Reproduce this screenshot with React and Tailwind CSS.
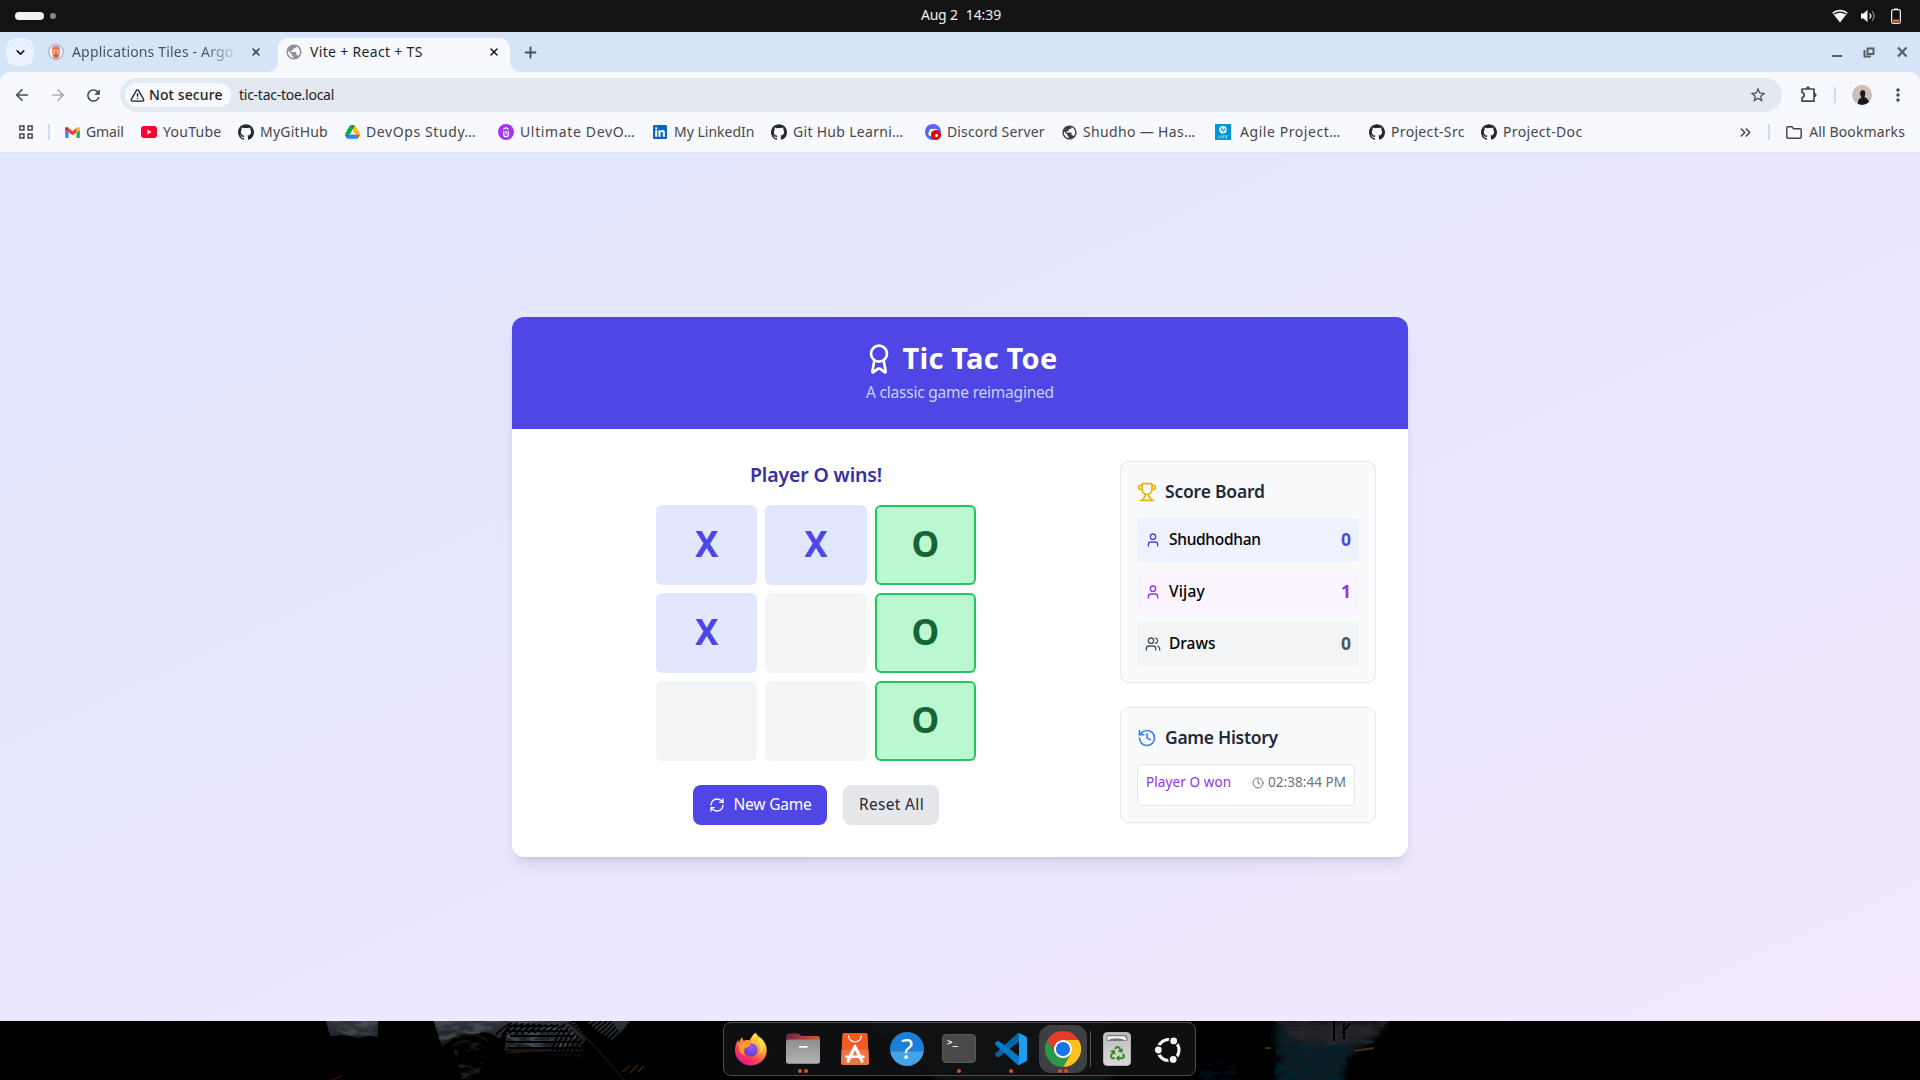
import React from "react";
import {
  Award, Trophy, User, Users, History, Clock, RefreshCw, ArrowLeft, ArrowRight,
  ChevronDown, ChevronsRight, X, Plus, TriangleAlert,
} from "lucide-react";
import { SiGithub } from "react-icons/si";
import { FaDiscord, FaRecycle } from "react-icons/fa";
import { MdPublic, MdStarBorder, MdMoreVert, MdRefresh } from "react-icons/md";

/* ---------- small icons ---------- */

const GmailIcon = () => (
  <svg viewBox="52 42 88 66" className="h-[11px] w-[15px]">
    <path fill="#4285f4" d="M58 108h14V74L52 59v43c0 3.32 2.69 6 6 6" />
    <path fill="#34a853" d="M120 108h14c3.32 0 6-2.69 6-6V59l-20 15" />
    <path fill="#fbbc04" d="M120 48v26l20-15v-8c0-7.42-8.47-11.65-14.4-7.2" />
    <path fill="#ea4335" d="M72 74V48l24 18 24-18v26L96 92" />
    <path fill="#c5221f" d="M52 51v8l20 15V48l-5.6-4.2c-5.94-4.45-14.4-.22-14.4 7.2" />
  </svg>
);

const YouTubeIcon = () => (
  <svg viewBox="0 0 16 12" className="h-3 w-4">
    <rect width="16" height="12" rx="3" fill="#ff0033" />
    <path d="M6.4 3.5v5L10.6 6z" fill="#fff" />
  </svg>
);

const DriveIcon = () => (
  <svg viewBox="0 0 87.3 78" className="h-[14px] w-[15px]">
    <path fill="#0066da" d="m6.6 66.85 3.85 6.65c.8 1.4 1.95 2.5 3.3 3.3l13.75-23.8h-27.5c0 1.55.4 3.1 1.2 4.5z" />
    <path fill="#00ac47" d="m43.65 25-13.75-23.8c-1.35.8-2.5 1.9-3.3 3.3l-25.4 44a9.06 9.06 0 0 0 -1.2 4.5h27.5z" />
    <path fill="#ea4335" d="m73.55 76.8c1.35-.8 2.5-1.9 3.3-3.3l1.6-2.75 7.65-13.25c.8-1.4 1.2-2.95 1.2-4.5h-27.502l5.852 11.5z" />
    <path fill="#00832d" d="m43.65 25 13.75-23.8c-1.35-.8-2.9-1.2-4.5-1.2h-18.5c-1.6 0-3.15.45-4.5 1.2z" />
    <path fill="#2684fc" d="m59.8 53h-32.3l-13.75 23.8c1.35.8 2.9 1.2 4.5 1.2h50.8c1.6 0 3.15-.45 4.5-1.2z" />
    <path fill="#ffba00" d="m73.4 26.5-12.7-22c-.8-1.4-1.95-2.5-3.3-3.3l-13.75 23.8 16.15 28h27.45c0-1.55-.4-3.1-1.2-4.5z" />
  </svg>
);

const GitHubIcon = () => <SiGithub size={16} color="#24292f" />;

const UdemyIcon = () => (
  <svg viewBox="0 0 16 16" className="size-4">
    <circle cx="8" cy="8" r="8" fill="#a435f0" />
    <path d="M5.4 5.2 8 3.7l2.6 1.5M5.7 7v3.4a2.3 2.3 0 0 0 4.6 0V7M8 6.4v4" fill="none" stroke="#fff" strokeWidth="1.2" />
  </svg>
);

const LinkedInIcon = () => (
  <svg viewBox="0 0 14 14" className="size-[14px]">
    <rect width="14" height="14" rx="1.2" fill="#0a66c2" />
    <g fill="#fff">
      <circle cx="3.2" cy="3.3" r="1.15" />
      <path d="M2.2 5.3h2v6.5h-2zM5.5 5.3h1.9v.9c.4-.7 1.1-1.1 2.1-1.1 1.9 0 2.4 1.2 2.4 3v3.7h-2V8.5c0-.9-.1-1.7-1.1-1.7s-1.3.7-1.3 1.7v3.3h-2z" />
    </g>
  </svg>
);

const DiscordIcon = () => (
  <span className="relative flex size-4 items-center justify-center rounded-full bg-[#5865f2]">
    <FaDiscord size={11} color="#fff" />
    <span className="absolute right-0 bottom-0 flex size-2.5 items-center justify-center rounded-full bg-[#e8000b]">
      <span className="size-[3px] rounded-full bg-white" />
    </span>
  </span>
);

const GlobeIcon = () => <MdPublic size={17} color="#3c4043" className="shrink-0" />;

const HpLifeIcon = () => (
  <svg viewBox="0 0 16 16" className="size-4">
    <rect width="16" height="16" fill="#0096d6" />
    <circle cx="8" cy="5.7" r="3.7" fill="#fff" />
    <path d="M7 3 5.8 7.2M6.6 4.8c1-.3 1.2 0 1 .7l-.5 1.7M9.3 4.4 8.2 8.6M9.2 4.6c1 0 1.3.2 1 .9-.3 1-.6 1.5-1.6 1.5" stroke="#0096d6" strokeWidth=".8" fill="none" />
    <path d="M3.8 11.6v2.4h1.4M6.6 11.4v2.8M8.2 14.2v-2.6h1.4M8.2 12.8h1.2M12.4 11.7h-1.5v2.4h1.5M10.9 12.9h1.3" stroke="#b9e2f5" strokeWidth=".7" fill="none" />
  </svg>
);

const ArgoIcon = () => (
  <svg viewBox="0 0 16 16" className="size-4">
    <circle cx="8" cy="8" r="7.4" fill="#f4f1fb" stroke="#9b8bd0" strokeWidth=".9" />
    <path d="M8 1.8c2.700 0 4.100 2 4.100 4.800 0 2-.5 3-.9 4.400-.3 1.200-.5 3.400-1.200 3.400H6c-.7 0-.9-2.200-1.200-3.400-.4-1.400-.9-2.400-.9-4.400 0-2.800 1.400-4.800 4.100-4.800z" fill="#ef7b4d" />
    <circle cx="5.900" cy="7.400" r="1.400" fill="#fff" />
    <circle cx="10.100" cy="7.400" r="1.400" fill="#fff" />
    <circle cx="5.900" cy="7.400" r=".6" fill="#222" />
    <circle cx="10.100" cy="7.400" r=".6" fill="#222" />
    <path d="M6.200 11.200c1.200.7 2.400.7 3.600 0-.2 1.600-3.400 1.600-3.600 0z" fill="#1d2733" />
  </svg>
);

const AppsIcon = () => (
  <svg viewBox="0 0 14 14" className="size-[14px]" fill="none" stroke="#474747" strokeWidth="1.500">
    <path d="M.9.9h4v4h-4zM9.100.9h4v4h-4zM.9 9.100h4v4h-4zM9.100 9.100h4v4h-4z" />
  </svg>
);

const ExtensionIcon = () => (
  <svg viewBox="0 0 20 20" className="size-5" fill="none" stroke="#3f4a5c" strokeWidth="1.700" strokeLinejoin="round">
    <path d="M3 4h12v12.200H3v-3.500c1.600-.3 2.200-1.300 2.200-2.600S4.600 7.700 3 7.500z" />
    <path d="M7.300 3.500a1.700 1.700 0 0 1 3.400 0zM15.500 8.300a1.700 1.700 0 0 1 0 3.400z" fill="#3f4a5c" strokeWidth=".8" />
  </svg>
);

const FolderIcon = () => (
  <svg viewBox="0 0 16 13" className="h-[13px] w-4" fill="none" stroke="#474747" strokeWidth="1.500" strokeLinejoin="round">
    <path d="M.8 2c0-.7.500-1.200 1.200-1.200h3.800l1.800 2H14c.7 0 1.200.5 1.200 1.200v7c0 .7-.5 1.200-1.200 1.200H2c-.7 0-1.200-.5-1.200-1.200z" />
  </svg>
);

/* ---------- system bar ---------- */

function TopBar() {
  return (
    <div className="grid h-8 grid-cols-[1fr_auto_1fr] items-center bg-[#131313] text-[14px] text-[#f0f0f0]">
      <div className="flex items-center pl-[15px]">
        <span className="h-2 w-[29px] rounded-full bg-[#f2f2f2]" />
        <span className="ml-[6px] size-1.5 rounded-full bg-[#868686]" />
      </div>
      <div className="flex gap-[8px] pb-[3px] pl-[2px]">
        <span className="tracking-[-0.2px]">Aug 2</span>
        <span className="tracking-[-0.1px]">14:39</span>
      </div>
      <div className="flex items-center justify-end gap-[13px] pr-[19px]">
        <svg viewBox="0 0 16 14" className="h-[14px] w-4">
          <path d="M.3 3.800C4.600-.3 11.400-.3 15.700 3.800L8 13.400z" fill="#f2f2f2" />
          <path d="M2.200 5.100c3.400-2.600 8.200-2.600 11.600 0" fill="none" stroke="#131313" strokeWidth="1.200" />
        </svg>
        <svg viewBox="0 0 15 14" className="h-[14px] w-[15px]">
          <path d="M0 4.500h2.500L6.500.7v12.600L2.500 9.500H0z" fill="#f2f2f2" />
          <path d="M8.600 4.500c1.400 1.400 1.400 3.600 0 5" stroke="#f2f2f2" strokeWidth="1.300" fill="none" />
          <path d="M11 2.300c2.800 2.700 2.800 6.700 0 9.400" stroke="#7a7a7a" strokeWidth="1.300" fill="none" />
        </svg>
        <svg viewBox="0 0 10 16" className="ml-[2px] h-4 w-[10px]">
          <path d="M3 .5h4v1.500H3z" fill="#f2f2f2" />
          <rect x=".6" y="1.700" width="8.800" height="13.600" rx="1.800" fill="none" stroke="#f2f2f2" strokeWidth="1.200" />
          <path d="M2 11.500h6v2.400H2z" fill="#f0682e" />
        </svg>
      </div>
    </div>
  );
}

/* ---------- browser chrome ---------- */

function TabStrip() {
  return (
    <div className="flex h-10 items-end bg-[#d5e4f7] text-[14px] text-[#1f1f1f]">
      <div className="flex h-10 w-[268px] items-center pl-[6px]">
        <div className="flex size-7 items-center justify-center rounded-[10px] bg-[#e8f1ff]">
          <ChevronDown size={13} strokeWidth={3.200} />
        </div>
        <div className="ml-[14px] flex size-4"><ArgoIcon /></div>
        <span className="ml-2 w-[164px] overflow-hidden bg-gradient-to-r from-[#474f58] from-80% to-[#c5d3e4] bg-clip-text pb-[2px] whitespace-nowrap tracking-[0.17px] text-transparent">
          Applications Tiles - Argo
        </span>
        <X size={12} strokeWidth={3.200} className="ml-[14px] shrink-0 text-[#3c4450]" />
      </div>
      <svg viewBox="0 0 10 10" className="size-[10px]"><path d="M10 0v10H0A10 10 0 0 0 10 0z" fill="#f8f9ff" /></svg>
      <div className="flex h-[34px] w-[232px] items-center rounded-t-[10px] bg-[#f8f9ff] pb-[6px] pl-[7px]">
        <MdPublic size={18} color="#8f9296" />
        <span className="ml-[7px] w-[178px] pb-[2px] tracking-[0.32px]">Vite + React + TS</span>
        <X size={12} strokeWidth={3.200} />
      </div>
      <svg viewBox="0 0 10 10" className="size-[10px]"><path d="M0 0v10h10A10 10 0 0 1 0 0z" fill="#f8f9ff" /></svg>
      <div className="flex h-10 flex-1 items-center justify-between pr-[12px] pl-[2px]">
        <Plus size={17} strokeWidth={2.600} className="text-[#44505e]" />
        <svg viewBox="0 0 76 12" className="h-3 w-[76px]" fill="none" stroke="#5a5f66" strokeWidth="2">
          <path d="M0 10h10M32.500 4v6.500H39" />
          <path d="M35.500 2.500h6v5.500h-6z" />
          <path d="M66 1.500l8.500 9M74.500 1.500l-8.500 9" strokeWidth="2.200" />
        </svg>
      </div>
    </div>
  );
}

function Toolbar() {
  return (
    <div className="bg-[#d5e4f7]">
      <div className="flex h-[46px] items-center rounded-t-[10px] bg-[#f8f9ff] pl-[13px] text-[14px] text-[#1f1f1f]">
        <ArrowLeft size={18} strokeWidth={2.300} className="text-[#44505e]" />
        <ArrowRight size={18} strokeWidth={2.300} className="ml-[18px] text-[#a9adb3]" />
        <MdRefresh size={19} className="ml-[17px] text-[#3f4a58]" />
        <div className="ml-[17px] flex h-[34px] w-[1662px] items-center rounded-full bg-[#e3e9f1] pr-[15px] pl-[5px]">
          <div className="flex h-6 w-[106px] items-center rounded-full bg-[#f8f9ff] pl-[5px]">
            <TriangleAlert size={15} strokeWidth={2.200} />
            <span className="ml-[4px] pb-[2px] font-medium tracking-[0.1px] whitespace-nowrap">Not secure</span>
          </div>
          <span className="ml-[8px] flex-1 pb-[2px] tracking-[-0.260px]">tic-tac-toe.local</span>
          <MdStarBorder size={18} color="#44474d" />
        </div>
        <span className="ml-[17px]"><ExtensionIcon /></span>
        <span className="ml-[15px] h-4 w-[2px] bg-[#c9defb]" />
        <svg viewBox="0 0 20 20" className="ml-4 size-5 rounded-full">
          <rect width="20" height="20" fill="#c9bfb8" />
          <rect width="20" height="6" fill="#d3beb0" />
          <path d="M6 20c-.6-4 .8-7 4-7.600-2-1-2.200-4.200-1.500-6C9.200 4.600 13 4.800 13.200 7c.2 2-.2 4-.8 5.200 3 .6 5 3.400 4.800 7.800z" fill="#151922" />
        </svg>
        <MdMoreVert size={20} color="#3f4a5c" className="ml-4" />
      </div>
    </div>
  );
}

const bookmarks = [
  { icon: <GmailIcon />, label: "Gmail", w: "w-[77px]", t: "tracking-[-0.1px]" },
  { icon: <YouTubeIcon />, label: "YouTube", w: "w-[97px]", t: "tracking-[0.28px]" },
  { icon: <GitHubIcon />, label: "MyGitHub", w: "w-[106px]", t: "tracking-[0.2px]" },
  { icon: <DriveIcon />, label: "DevOps Study…", w: "w-[154px]", t: "tracking-[0.6px]" },
  { icon: <UdemyIcon />, label: "Ultimate DevO…", w: "w-[154px]", t: "tracking-[0.64px]" },
  { icon: <LinkedInIcon />, label: "My LinkedIn", w: "w-[119px]", t: "tracking-[0px]" },
  { icon: <GitHubIcon />, label: "Git Hub Learni…", w: "w-[154px]", t: "tracking-[0.3px]" },
  { icon: <DiscordIcon />, label: "Discord Server", w: "w-[136px]", t: "tracking-[0.14px]" },
  { icon: <GlobeIcon />, label: "Shudho — Has…", w: "w-[154px]", t: "tracking-[0.34px]" },
  { icon: <HpLifeIcon />, label: "Agile Project…", w: "w-[154px]", t: "tracking-[0.56px] pl-[3px]" },
  { icon: <GitHubIcon />, label: "Project-Src", w: "w-[112px]", t: "tracking-[0.33px]" },
  { icon: <GitHubIcon />, label: "Project-Doc", w: "w-[112px]", t: "tracking-[0.35px]" },
];

function BookmarksBar() {
  return (
    <div className="flex h-[35px] items-start border-b border-[#dfe3ee] bg-[#f8f9ff] text-[14px] text-[#474747]">
      <div className="flex h-7 w-full items-center pr-[15px] pl-[19px]">
        <AppsIcon />
        <span className="mr-[14px] ml-[15px] h-4 w-[2px] bg-[#c9defb]" />
        {bookmarks.map((b, i) => (
          <div key={i} className={`flex shrink-0 items-center gap-1.5 ${b.w}`}>
            <span className="flex size-4 shrink-0 items-center justify-center">{b.icon}</span>
            <span className={`pb-[2px] whitespace-nowrap ${b.t}`}>{b.label}</span>
          </div>
        ))}
        <ChevronsRight size={17} strokeWidth={2.200} className="ml-auto" />
        <span className="mr-[16px] ml-[14px] h-4 w-[2px] bg-[#c9defb]" />
        <FolderIcon />
        <span className="ml-[7px] pb-[2px] tracking-[0.12px]">All Bookmarks</span>
      </div>
    </div>
  );
}

/* ---------- game ---------- */

const board = ["X", "X", "O", "X", null, "O", null, null, "O"];
const winning = [2, 5, 8];

function cellClass(value, i) {
  if (winning.includes(i)) return "border-2 border-[#22c55e] bg-[#bbf7d0] text-[#166534]";
  if (value === "X") return "bg-[#e0e7ff] text-[#4f46e5]";
  return "bg-[#f3f4f6]";
}

function Game() {
  return (
    <div className="col-span-2 flex flex-col items-center">
      <h2 className="mb-4 text-[19.500px] leading-7 font-semibold tracking-[-0.150px] text-[#3730a3]">Player O wins!</h2>
      <div className="grid w-80 grid-cols-3 gap-2">
        {board.map((v, i) => (
          <button key={i} className={`flex h-20 items-center justify-center rounded-md pb-[2px] text-[35px] leading-10 font-bold ${cellClass(v, i)}`}>
            {v}
          </button>
        ))}
      </div>
      <div className="mt-6 flex gap-4">
        <button className="flex h-10 w-[134px] items-center rounded-lg bg-[#4f46e5] pl-4 text-[15.500px] tracking-[-0.2px] whitespace-nowrap text-white">
          <RefreshCw size={16} className="mr-[8.500px]" />
          New Game
        </button>
        <button className="h-10 w-24 rounded-lg bg-[#e5e7eb] pl-px text-[15.500px] tracking-[0.33px] whitespace-nowrap text-[#1f2937]">Reset All</button>
      </div>
    </div>
  );
}

const scores = [
  { name: "Shudhodhan", value: 0, Icon: User, row: "bg-[#eef2ff]", color: "text-[#4f46e5]", t: "tracking-[-0.3px]" },
  { name: "Vijay", value: 1, Icon: User, row: "bg-[#faf5ff]", color: "text-[#9333ea]", t: "tracking-[0.2px]" },
  { name: "Draws", value: 0, Icon: Users, row: "bg-[#f3f4f6]", color: "text-[#4b5563]", t: "tracking-[0px]" },
];

function Sidebar() {
  return (
    <div className="flex flex-col gap-6">
      <section className="rounded-lg border border-[#e5e7eb] bg-[#f9fafb] p-4">
        <h3 className="mb-3 flex h-7 items-center text-[17.500px] leading-7 font-semibold tracking-[-0.2px] text-[#1f2937]">
          <Trophy size={20} className="mr-2 text-[#eab308]" />
          <span className="pb-[2px]">Score Board</span>
        </h3>
        <div className="flex flex-col gap-2">
          {scores.map(({ name, value, Icon, row, color, t }) => (
            <div key={name} className={`flex h-11 items-center rounded p-2 ${row}`}>
              <Icon size={16} className={`mr-2 ${color}`} />
              <span className={`pb-[2px] text-[15.500px] leading-6 font-medium text-black ${t}`}>{name}</span>
              <span className={`ml-auto pb-[2px] text-[17.500px] leading-6 font-bold ${color}`}>{value}</span>
            </div>
          ))}
        </div>
      </section>
      <section className="rounded-lg border border-[#e5e7eb] bg-[#f9fafb] p-4">
        <h3 className="mb-3 flex h-7 items-center text-[17.500px] leading-7 font-semibold tracking-[-0.3px] text-[#1f2937]">
          <History size={20} className="mr-2 text-[#3b82f6]" />
          <span className="pb-[2px]">Game History</span>
        </h3>
        <div className="pr-1">
          <div className="flex h-[42px] items-start justify-between rounded border border-[#e5e7eb] bg-white px-2 pt-[7px] text-[13.500px] leading-5 whitespace-nowrap">
            <span className="tracking-[0.1px] text-[#9333ea]">Player O won</span>
            <span className="flex items-center text-[#6b7280]">
              <Clock size={12} className="mt-[2px] mr-1" />
              <span className="tracking-[0.050px]">02:38:44 PM</span>
            </span>
          </div>
        </div>
      </section>
    </div>
  );
}

function Page() {
  return (
    <main className="flex h-[868px] items-center justify-center bg-linear-to-br/srgb from-[#e0e7ff] to-[#f3e8ff]">
      <div className="w-[896px] overflow-hidden rounded-xl bg-white shadow-lg">
        <header className="flex h-28 flex-col items-center bg-[#4f46e5] pt-6 text-white">
          <h1 className="flex h-9 items-center gap-2 text-[29px] leading-8 font-bold tracking-[0.24px] whitespace-nowrap">
            <Award size={32} />
            <span className="pb-[2px]">Tic Tac Toe</span>
          </h1>
          <p className="mt-[3px] text-[15.500px] leading-6 tracking-[-0.22px] text-[#c7d2fe]">A classic game reimagined</p>
        </header>
        <div className="grid grid-cols-3 gap-8 p-8">
          <Game />
          <Sidebar />
        </div>
      </div>
    </main>
  );
}

/* ---------- dock ---------- */

const Firefox = () => (
  <svg viewBox="0 0 34 34" className="size-[34px]">
    <defs>
      <linearGradient id="ffBody" x1=".85" y1=".1" x2=".25" y2=".95">
        <stop offset="0" stopColor="#fff44f" />
        <stop offset=".35" stopColor="#ffa436" />
        <stop offset=".65" stopColor="#ff4b4b" />
        <stop offset="1" stopColor="#e31587" />
      </linearGradient>
      <radialGradient id="ffGlobe" cx=".6" cy=".3" r=".8">
        <stop offset="0" stopColor="#9059ff" />
        <stop offset="1" stopColor="#5b3cc4" />
      </radialGradient>
    </defs>
    <path d="M21.500.8c1.600 2.200 2.200 3.700 2.400 5.800 1-.3 1.500-1 1.800-1.600 4.200 3.200 7 8 7 13C32.700 26.800 25.800 33.500 17 33.500S1 26.800 1 18.500c0-4 1-7.500 3-10.500.2 1 .5 1.600 1 2.200.7-2 1.800-3.700 3.200-4.900.2 1.600.7 2.600 1.600 3.400 2-.9 4.200-.7 5.900-.2C17 5.500 18.800 2.700 21.500.8z" fill="url(#ffBody)" />
    <circle cx="17" cy="18" r="6.600" fill="url(#ffGlobe)" />
    <path d="M4.500 12.500c3.600-2.500 7-3 10.500-1.200 1 .6 1.600 1.200 2.400 2-1.600.3-2.300 1.200-3.700 2-1.400.7-3 .6-3.600 2.200-1 2.600-.2 5 1.400 6.500-4.500-1.500-7.500-6.500-7-11.500z" fill="#ff9b2b" />
    <path d="M21.500.8c1.600 2.200 2.600 5 2.400 8.200 3 3.500 3.200 9 .8 13 3.800-2 5.600-5.500 4.800-10C28.500 7.500 25 5.200 21.500.8z" fill="#ffe14a" opacity=".85" />
  </svg>
);

const Files = () => (
  <svg viewBox="0 0 34 31" className="h-[31px] w-[34px]">
    <defs>
      <linearGradient id="fTab"><stop offset="0" stopColor="#6f2347" /><stop offset="1" stopColor="#e25826" /></linearGradient>
      <linearGradient id="fBody" x2="0" y2="1"><stop offset="0" stopColor="#8f8f8f" /><stop offset="1" stopColor="#b2b2b2" /></linearGradient>
    </defs>
    <path d="M0 3a2.500 2.500 0 0 1 2.500-2.500h9.500l3.500 2.500H31a3 3 0 0 1 3 3v8H0z" fill="url(#fTab)" />
    <rect y="6.500" width="34" height="24.300" rx="2.800" fill="url(#fBody)" />
    <rect x="13" y="13" width="8.500" height="1.800" rx=".4" fill="#fff" />
  </svg>
);

const AppCenter = () => (
  <svg viewBox="0 0 28 32" className="h-8 w-7">
    <path d="M3 0h22c1 0 1.500.6 1.600 1.500L28 29.500c0 1.500-.8 2.500-2.300 2.500H2.300C.8 32 0 31 0 29.500L1.400 1.500C1.500.6 2 0 3 0z" fill="#f15a22" />
    <path d="M.6 17h26.800l.6 12.500c0 1.500-.8 2.500-2.300 2.500H2.300C.8 32 0 31 0 29.500z" fill="#ee7545" />
    <path d="M7.500 2.300c0 8.800 13 8.800 13 0" fill="none" stroke="#fff" strokeWidth="1.300" />
    <path d="M14 13.500 7 28M14 13.500 21 28" stroke="#fff" strokeWidth="3.200" strokeLinecap="round" />
    <path d="M5.500 23.800h17" stroke="#fff" strokeWidth="2.600" strokeLinecap="round" />
  </svg>
);

const Help = () => (
  <div className="flex size-[34px] items-center justify-center rounded-full bg-linear-to-b from-[#1b7fd6] from-55% to-[#43a3e6] to-60% pb-[1px] text-[28px] leading-none text-white">?</div>
);

const Terminal = () => (
  <div className="h-[29px] w-[34px] rounded-[4px] border border-[#5a5a5a] bg-[#4a4a4a] pt-[3px] pl-1 font-['DejaVu_Sans_Mono',monospace] text-[9px] leading-none font-bold text-white">&gt;_</div>
);

const VSCode = () => (
  <svg viewBox="0 0 100 100" className="size-8">
    <path fill="#0065a9" d="M96.460 10.800 75.860.88a6.230 6.230 0 0 0-7.100 1.200L1.300 63.600a4.170 4.170 0 0 0 0 6.160l5.500 5.010a4.170 4.170 0 0 0 5.320.24L93.360 13.400c2.730-2.070 6.640-.12 6.640 3.300v-.24a6.250 6.250 0 0 0-3.540-5.630z" />
    <path fill="#007acc" d="M96.460 89.200l-20.600 9.920a6.230 6.230 0 0 1-7.100-1.200L1.300 36.400a4.170 4.170 0 0 1 0-6.160l5.500-5.010a4.170 4.170 0 0 1 5.320-.24l81.240 61.620c2.730 2.070 6.640.12 6.640-3.300v.24a6.250 6.250 0 0 1-3.540 5.630z" />
    <path fill="#1f9cf0" d="M75.860 99.130a6.230 6.230 0 0 1-7.110-1.210c2.310 2.300 6.250.67 6.250-2.590V4.670c0-3.260-3.940-4.890-6.250-2.590a6.230 6.230 0 0 1 7.100-1.200l20.600 9.900A6.250 6.250 0 0 1 100 16.410v67.170a6.250 6.250 0 0 1-3.540 5.630z" />
  </svg>
);

const Chrome = () => (
  <svg viewBox="0 0 48 48" className="size-9">
    <circle cx="24" cy="24" r="12.500" fill="#fff" />
    <path fill="#e33b2e" d="M24 12H44.781a23.994 23.994 0 0 0-41.564.003L13.608 30l.009-.002A11.985 11.985 0 0 1 24 12Z" />
    <path fill="#fcc31e" d="M34.391 30.003 24.001 48A23.994 23.994 0 0 0 44.780 12.003H23.999l-.003.009A11.985 11.985 0 0 1 34.391 30.003Z" />
    <path fill="#2a9a48" d="M13.609 30.003 3.218 12.006A23.994 23.994 0 0 0 24.003 48L34.393 30.003l-.007-.007a11.985 11.985 0 0 1-20.778.007Z" />
    <circle cx="24" cy="24" r="9.500" fill="#1a73e8" />
  </svg>
);

const Trash = () => (
  <div className="flex h-[34px] w-7 flex-col items-center rounded-[4px] border border-[#b5b5b5] bg-linear-to-b from-[#bdbdbd] to-[#d9d9d9] pt-[2px]">
    <svg viewBox="0 0 22 6" className="h-1.5 w-[22px]">
      <path d="M1.500 0h19l1.500 6H0z" fill="#7b7b7b" />
      <path d="M2 1.200h17l2 4.800c-3-1.500-6-3-10-2.800S4 3.800 1 5.500z" fill="#fafafa" />
    </svg>
    <FaRecycle size={15} color="#2f8a1f" className="mt-[5px]" />
  </div>
);

const Ubuntu = () => (
  <svg viewBox="0 0 28 28" className="size-7">
    <circle cx="14.500" cy="14" r="10.500" fill="none" stroke="#f4f4f4" strokeWidth="3" />
    <g fill="#f4f4f4" stroke="#0f1011" strokeWidth="1.600">
      <circle cx="4.300" cy="14" r="4.200" />
      <circle cx="19.700" cy="4.900" r="4.200" />
      <circle cx="19.200" cy="23.400" r="4.200" />
    </g>
  </svg>
);

const dockApps = [
  { el: <Firefox />, dots: 0 },
  { el: <Files />, dots: 2 },
  { el: <AppCenter />, dots: 0 },
  { el: <Help />, dots: 0 },
  { el: <Terminal />, dots: 1 },
  { el: <VSCode />, dots: 1 },
  { el: <Chrome />, dots: 2, active: true },
];

function DockItem({ el, dots, active }) {
  return (
    <div className="flex h-12 w-[52px] justify-center">
      <div className={`relative flex size-12 items-center justify-center rounded-xl ${active ? "bg-[#3d3f41]" : ""}`}>
        {el}
        <div className="absolute inset-x-0 bottom-0 flex justify-center gap-[2.500px]">
          {Array.from({ length: dots }, (_, k) => <span key={k} className="size-1 rounded-full bg-[#e04e1b]" />)}
        </div>
      </div>
    </div>
  );
}

/* Palm frond: leaves hanging off a stem that runs from (x, y) by (dx, dy) */
function Frond({ x, y, dx, dy, n, lx, ly }) {
  const leaves = Array.from({ length: n }, (_, i) => {
    const t = i / n;
    const k = 1 - t * 0.4;
    return `M${x + dx * t} ${y + dy * t}q${lx * 0.6 * k} ${ly * 0.3 * k} ${lx * k} ${ly * k}`;
  }).join("");
  return <path d={leaves} fill="none" stroke="#000" strokeWidth="1.700" />;
}

function Wallpaper() {
  return (
    <svg viewBox="0 0 1920 59" className="absolute inset-0 h-full w-full" preserveAspectRatio="none">
      <defs>
        <filter id="grain" x="0" y="0" width="1" height="1">
          <feTurbulence type="fractalNoise" baseFrequency=".07 .2" numOctaves="3" seed="4" result="n" />
          <feColorMatrix in="n" type="matrix" values="0 0 0 0 0  0 0 0 0 0  0 0 0 0 0  0 0 0 3 -1.200" result="m" />
          <feComposite in="SourceGraphic" in2="m" operator="in" />
        </filter>
        <filter id="soft"><feGaussianBlur stdDeviation=".6" /></filter>
        <filter id="haze"><feGaussianBlur stdDeviation="4" /></filter>
        <linearGradient id="dusk" x2="0" y2="1"><stop offset="0" stopColor="#30343a" /><stop offset="1" stopColor="#0c1013" /></linearGradient>
      </defs>
      <rect width="1920" height="59" fill="#000" />
      <g filter="url(#soft)">
        <path d="M326 0h52v16l-8-1-12 2-14-3-14 1zM434 0h74v4l-8 14-10-6-20-2-18 8-10 8-6-18zM508 0h66l12 16-6 20-76-6zM586 0h44l-16 20-14-8z" fill="url(#dusk)" />
        <path d="M326 0h52v14l-34 0zM434 0h70l-14 10-38 8-12 2zM510 0h56l16 26-76 2z" fill="#474d55" filter="url(#grain)" />
        <path d="M452 24c8-6 22-8 34 2l-4 20-6 12h-14l-6-20z" fill="#1b1f22" filter="url(#grain)" />
        <path d="M441 25c12-11 34-16 47-5" fill="none" stroke="#1f120b" strokeWidth="1.500" />
        <path d="M460 33h12v7h-12zM404 0l10 22M416 0v16M426 4l14 30" stroke="#000" strokeWidth="4" fill="#000" />
        <path d="M508 5h50M506 10h62M510 15h64M506 21h74M508 27h74M506 32h78" stroke="#000" strokeWidth="2" />
        <Frond x={512} y={2} dx={58} dy={2} n={10} lx={-16} ly={12} />
        <Frond x={570} y={2} dx={40} dy={36} n={14} lx={30} ly={-22} />
        <Frond x={566} y={2} dx={44} dy={46} n={14} lx={-14} ly={28} />
        <path d="M568 1c18 14 38 36 56 58" fill="none" stroke="#1d1109" strokeWidth="1.600" />
        <path d="M506 32l34-2M332 59l10-4" stroke="#26120a" strokeWidth="1.500" fill="none" />
        <path d="M622 51l8-6M630 52l8-8M638 51l6-6" stroke="#3a2209" strokeWidth="1.500" fill="none" />
      </g>
      <path d="M860 0h250v59H940z" fill="#121a1e" filter="url(#haze)" />
      <g filter="url(#haze)">
        <path d="M1278 0h110l-16 18-26 20-4 24h-64l4-30-8-14z" fill="#0a1b24" />
        <path d="M1280 0h110l-18 16-30 8-50-8z" fill="#202228" />
      </g>
      <g filter="url(#soft)">
        <path d="M1276 0h112l-14 22-70 8z" fill="#25272c" filter="url(#grain)" />
        <path d="M1276 24h72l-4 35h-70z" fill="#06202b" filter="url(#grain)" />
        <path d="M1200 40h36v19h-36z" fill="#020b18" filter="url(#grain)" />
        <path d="M1334 20V0M1344 18V2M1342 12l8-10" stroke="#000" strokeWidth="2" />
        <path d="M1354 30l20-3" stroke="#4a2816" strokeWidth="2" />
        <path d="M1265 27h6" stroke="#39450f" strokeWidth="1.500" />
      </g>
    </svg>
  );
}

function Dock() {
  return (
    <div className="relative flex h-[59px] overflow-hidden bg-black pl-[723px]">
      <Wallpaper />
      <div className="relative mt-[1px] flex h-[54px] w-[473px] items-center rounded-lg border border-[#4b4c4d] bg-[#101112]/90 pb-px pl-[1px]">
        {dockApps.map((a, i) => <DockItem key={i} {...a} />)}
        <span className="mx-[0.500px] h-9 w-px bg-[#555]" />
        <DockItem el={<Trash />} dots={0} />
        <div className="-ml-[1.500px] pt-0.5"><DockItem el={<Ubuntu />} dots={0} /></div>
      </div>
    </div>
  );
}

export default function App() {
  return (
    <div className="h-[1080px] w-[1920px] overflow-hidden bg-black font-['Noto_Sans','Open_Sans',sans-serif]">
      <TopBar />
      <TabStrip />
      <Toolbar />
      <BookmarksBar />
      <Page />
      <Dock />
    </div>
  );
}
